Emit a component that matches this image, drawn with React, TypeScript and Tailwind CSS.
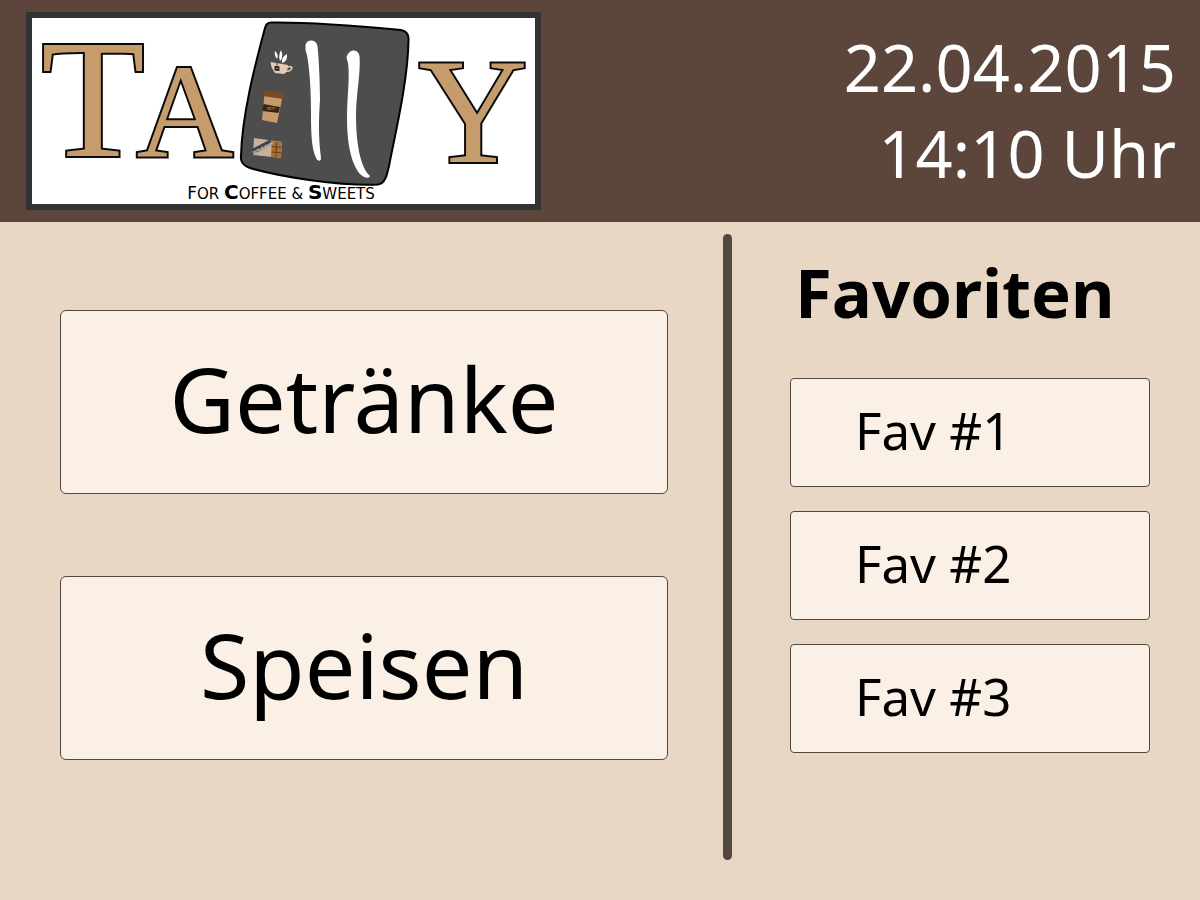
const categories = ["Getränke", "Speisen"];
const favorites = ["Fav #1", "Fav #2", "Fav #3"];

function Logo() {
  return (
    <svg
      viewBox="32 18 503 186"
      className="block w-[515px] max-w-full shrink overflow-visible border-[6px] border-[#333333] bg-white"
      role="img"
      aria-label="Tally – For Coffee & Sweets"
    >
      <g
        fill="#c69c6d"
        stroke="#0a0a0a"
        strokeWidth="4"
        strokeLinejoin="miter"
        paintOrder="stroke"
        fontFamily="'Liberation Serif', serif"
        textAnchor="middle"
      >
        <text x="93" y="156" fontSize="170">T</text>
        <text x="185" y="156" fontSize="134">A</text>
        <text x="473" y="162" fontSize="151">Y</text>
      </g>

      <path
        d="M271 22.500C310 22 370 27 401 30C406 31 409 34 408.500 40C408 80 396 130 389 166C387 175 385 184 378 184.500C340 186 280 177 250 168C244 166 240 163 241 156C242 115 255 65 265 28C266 24 268 22.500 271 22.500Z"
        fill="#4d4d4d"
        stroke="#000"
        strokeWidth="2"
      />
      <path
        d="M305.500 45C307 39 316 39 317.500 46C319 60 320 85 320 100C319 115 318 135 321 158C321 161 319 162 316.500 159C311 148 311 130 311 110C311 85 309 60 305.500 50Z"
        fill="#fff"
      />
      <path
        d="M346.500 58C348 49 358 48 359.500 56C361 72 356 95 356 115C356 138 359 166 370 176C369 179 364 178 360 174C350 162 347 140 347 118C347 95 350 78 348 63Z"
        fill="#fff"
      />

      {/* Steaming tea cup */}
      <g>
        <path
          d="M275 51q-1 4 2 8q2-4-2-8M281 50q-3 6-1 11q4-4 1-11M287 54q-6 3-5 9q6-2 5-9"
          fill="#fff"
        />
        <path d="M270.500 62L288 65Q288 72 284 74L275 73Q271 68 270.500 62Z" fill="#e6cbb0" />
        <path d="M287 67q5-1 5 1q-2 4-6 3" fill="none" stroke="#e6cbb0" strokeWidth="1.500" />
        <path d="M277 63v4" stroke="#222" strokeWidth="0.700" />
        <path d="M274.500 66l5 .5v4.500l-5-.5z" fill="#222" />
        <path d="M275.500 68.500h3" stroke="#aaa" strokeWidth="0.700" />
      </g>

      {/* Coffee to go */}
      <g>
        <path d="M264.500 94L282.500 97L277 123L262 120Z" fill="#c69c6d" />
        <path d="M264.500 90L283.500 93L284 96L283 99L263 96L263 93Z" fill="#754c24" />
        <path d="M263.500 104L280 107L278.500 113L262.500 111Z" fill="#3b2413" />
        <text
          x="271"
          y="110"
          fontSize="4"
          fill="#c9b29b"
          textAnchor="middle"
          fontFamily="'Liberation Serif', serif"
        >
          HOT
        </text>
      </g>

      {/* Chocolate bar */}
      <g>
        <path d="M254 138L282 142L281 158L253 155Z" fill="#c7b299" />
        <path d="M272 141L282 142L281 158L271 157Z" fill="#a86f38" />
        <path
          d="M276.500 142l-.7 15.500M271.500 146.500l10 .8M271.500 152l10 .8"
          stroke="#603813"
          strokeWidth="0.900"
        />
        <path d="M252 149L270 139.500L273 144L253 154.500Z" fill="#3f4145" />
        <text
          x="263"
          y="149"
          transform="rotate(-27 263 148)"
          fontSize="4"
          fontWeight="bold"
          fill="#eee"
          textAnchor="middle"
          fontFamily="'Liberation Sans', sans-serif"
        >
          Schokolade
        </text>
      </g>

      <text
        x="281"
        y="199"
        fontSize="15"
        textAnchor="middle"
        fontFamily="'DejaVu Sans', sans-serif"
      >
        <tspan fontSize="17">F</tspan>OR{" "}
        <tspan fontSize="20" fontWeight="700">C</tspan>OFFEE &amp;{" "}
        <tspan fontSize="20" fontWeight="700">S</tspan>WEETS
      </text>
    </svg>
  );
}

export default function App() {
  return (
    <div className="flex min-h-screen flex-col bg-[#e8d7c5] font-['Noto_Sans',sans-serif] text-black">
      <header className="flex items-start justify-between gap-6 bg-[#5c463b] pt-3 pr-6 pb-3 pl-[26px]">
        <Logo />
        <div className="pt-3 text-right text-[65px] leading-[86px] whitespace-nowrap text-white">
          <div>22.04.2015</div>
          <div>14:10 Uhr</div>
        </div>
      </header>

      <main className="grid flex-1 grid-cols-[minmax(0,1fr)_9px_39%] pt-3 pb-10">
        <nav className="flex flex-col gap-[82px] pt-19 pr-[55px] pl-15">
          {categories.map((name) => (
            <button
              key={name}
              type="button"
              className="h-[184px] rounded-md border border-[#534741] bg-[#fbf0e5] pb-2 text-[90px] leading-none"
            >
              {name}
            </button>
          ))}
        </nav>

        <div className="rounded-full bg-[#534741]" />

        <aside className="flex flex-col pr-[50px] pl-[58px]">
          <h1 className="pt-3 pl-[5px] text-[67px] leading-[92px] font-bold">Favoriten</h1>
          <div className="flex flex-col gap-6 pt-10">
            {favorites.map((name) => (
              <button
                key={name}
                type="button"
                className="h-[109px] rounded border border-[#534741] bg-[#fbf0e5] pb-1 pl-16 text-left text-[51px] leading-none"
              >
                {name}
              </button>
            ))}
          </div>
        </aside>
      </main>
    </div>
  );
}
